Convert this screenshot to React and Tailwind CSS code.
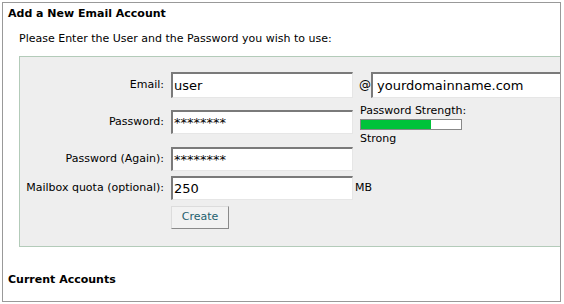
import React from "react";

const font = { fontFamily: '"DejaVu Sans", Verdana, sans-serif' };

const inputCls =
    "h-[24px] bg-white border-t-2 border-l-2 border-r border-b border-t-[#7a7a7a] border-l-[#7a7a7a] border-r-[#e6e6e6] border-b-[#e6e6e6] pl-[1px] text-[13px] text-black outline-none";

const Label = ({ children }) => (
    <div className="w-[151px] shrink-0 text-right pr-[7px] text-[11px] text-black">{children}</div>
);

export default function App() {
    return (
        <div className="w-[564px] h-[304px] bg-white p-[2px]" style={font}>
            <div className="w-[559px] h-[300px] border border-[#999] overflow-hidden flex flex-col">
                {/* Título */}
                <div className="pl-[5px] pt-[4px] text-[11px] font-bold text-black leading-[14px]">
                    Add a New Email Account
                </div>
                <div className="pl-[16px] pt-[11px] text-[11px] text-black leading-[14px]">
                    Please Enter the User and the Password you wish to use:
                </div>

                {/* Panel del formulario */}
                <div className="ml-[16px] mt-[10px] w-[600px] h-[191px] shrink-0 bg-[#eeeeee] border border-[#b3cbb9] pt-[15px] flex flex-col">
                    <div className="flex items-center h-[26px]">
                        <Label>Email:</Label>
                        <input className={`${inputCls} w-[182px] h-[26px]`} defaultValue="user" readOnly style={font} />
                        <span className="ml-[6px] text-[12px] text-black">@</span>
                        <input className={`${inputCls} w-[220px] h-[26px] pl-[4px]`} defaultValue="yourdomainname.com" readOnly style={font} />
                    </div>

                    <div className="flex items-start mt-[6px]">
                        <div className="flex items-center h-[24px] mt-[6px]">
                            <Label>Password:</Label>
                            <input className={`${inputCls} w-[182px]`} defaultValue="********" readOnly style={font} />
                        </div>
                        <div className="ml-[7px] flex flex-col text-[11px] text-black leading-[13px]">
                            <span>Password Strength:</span>
                            <div className="w-[102px] h-[11px] border border-[#888] bg-white mt-[2px] mb-[2px]">
                                <div className="h-full bg-[#00c33a]" style={{ width: "70%" }} />
                            </div>
                            <span>Strong</span>
                        </div>
                    </div>

                    <div className="flex items-center h-[24px] mt-[2px]">
                        <Label>Password (Again):</Label>
                        <input className={`${inputCls} w-[182px]`} defaultValue="********" readOnly style={font} />
                    </div>

                    <div className="flex items-center h-[24px] mt-[5px]">
                        <Label>Mailbox quota (optional):</Label>
                        <input className={`${inputCls} w-[182px]`} defaultValue="250" readOnly style={font} />
                        <span className="ml-[2px] text-[11px] text-black">MB</span>
                    </div>

                    <div className="flex mt-[6px]">
                        <div className="w-[151px] shrink-0" />
                        <button
                            type="button"
                            className="w-[58px] h-[23px] bg-[#f2f2f2] border border-t-[#dcdcdc] border-l-[#dcdcdc] border-r-[#8a8a8a] border-b-[#8a8a8a] text-[11px] text-[#1e5f6e]"
                            style={font}
                        >
                            Create
                        </button>
                    </div>
                </div>

                <div className="pl-[5px] mt-[26px] text-[11px] font-bold text-black leading-[14px]">
                    Current Accounts
                </div>
            </div>
        </div>
    );
}
